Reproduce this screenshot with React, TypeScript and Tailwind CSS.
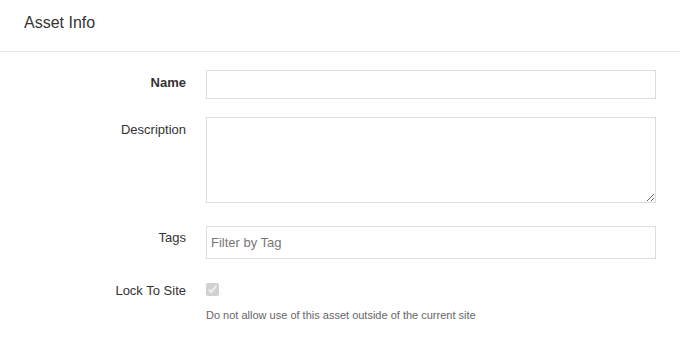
import { useState } from "react";

const labelCls = "w-[186px] shrink-0 text-right text-[13px] text-[#333333]";

const AssetInfo = () => {
  const [name, setName] = useState("");
  const [description, setDescription] = useState("");
  const [tag, setTag] = useState("");

  return (
    <div className="min-h-screen bg-white font-['Liberation_Sans',Arial,sans-serif] text-[#333333]">
      <header className="h-[52px] border-b border-[#e8e8e8] px-6 pt-[13px]">
        <h1 className="text-[16px] leading-[20px] text-[#333333]">Asset Info</h1>
      </header>

      <form className="flex flex-col pt-[18px] pr-6" onSubmit={(e) => e.preventDefault()}>
        <div className="flex items-start">
          <label className={labelCls + " pt-[3px] font-bold"}>Name</label>
          <input
            type="text"
            value={name}
            onChange={(e) => setName(e.target.value)}
            className="ml-5 h-[29px] flex-1 border border-[#dddddd] px-1 text-[13px] outline-none"
          />
        </div>

        <div className="mt-[18px] flex items-start">
          <label className={labelCls + " pt-[3px]"}>Description</label>
          <textarea
            value={description}
            onChange={(e) => setDescription(e.target.value)}
            className="ml-5 h-[86px] flex-1 border border-[#dddddd] px-1 text-[13px] outline-none"
          />
        </div>

        <div className="mt-[23px] flex items-start">
          <label className={labelCls + " pt-[2px]"}>Tags</label>
          <input
            type="text"
            value={tag}
            onChange={(e) => setTag(e.target.value)}
            placeholder="Filter by Tag"
            className="ml-5 h-[33px] flex-1 border border-[#dddddd] px-[4px] text-[13px] text-[#333333] outline-none placeholder:text-[#777777]"
          />
        </div>

        <div className="mt-[23px] flex items-start">
          <label className={labelCls + " -mt-[1px]"}>Lock To Site</label>
          <div className="ml-5 flex flex-col">
            <input type="checkbox" checked disabled readOnly className="mt-[1px] ml-0 h-[13px] w-[13px]" />
            <p className="mt-[11px] text-[11px] text-[#666666]">
              Do not allow use of this asset outside of the current site
            </p>
          </div>
        </div>
      </form>
    </div>
  );
};

export default AssetInfo;
